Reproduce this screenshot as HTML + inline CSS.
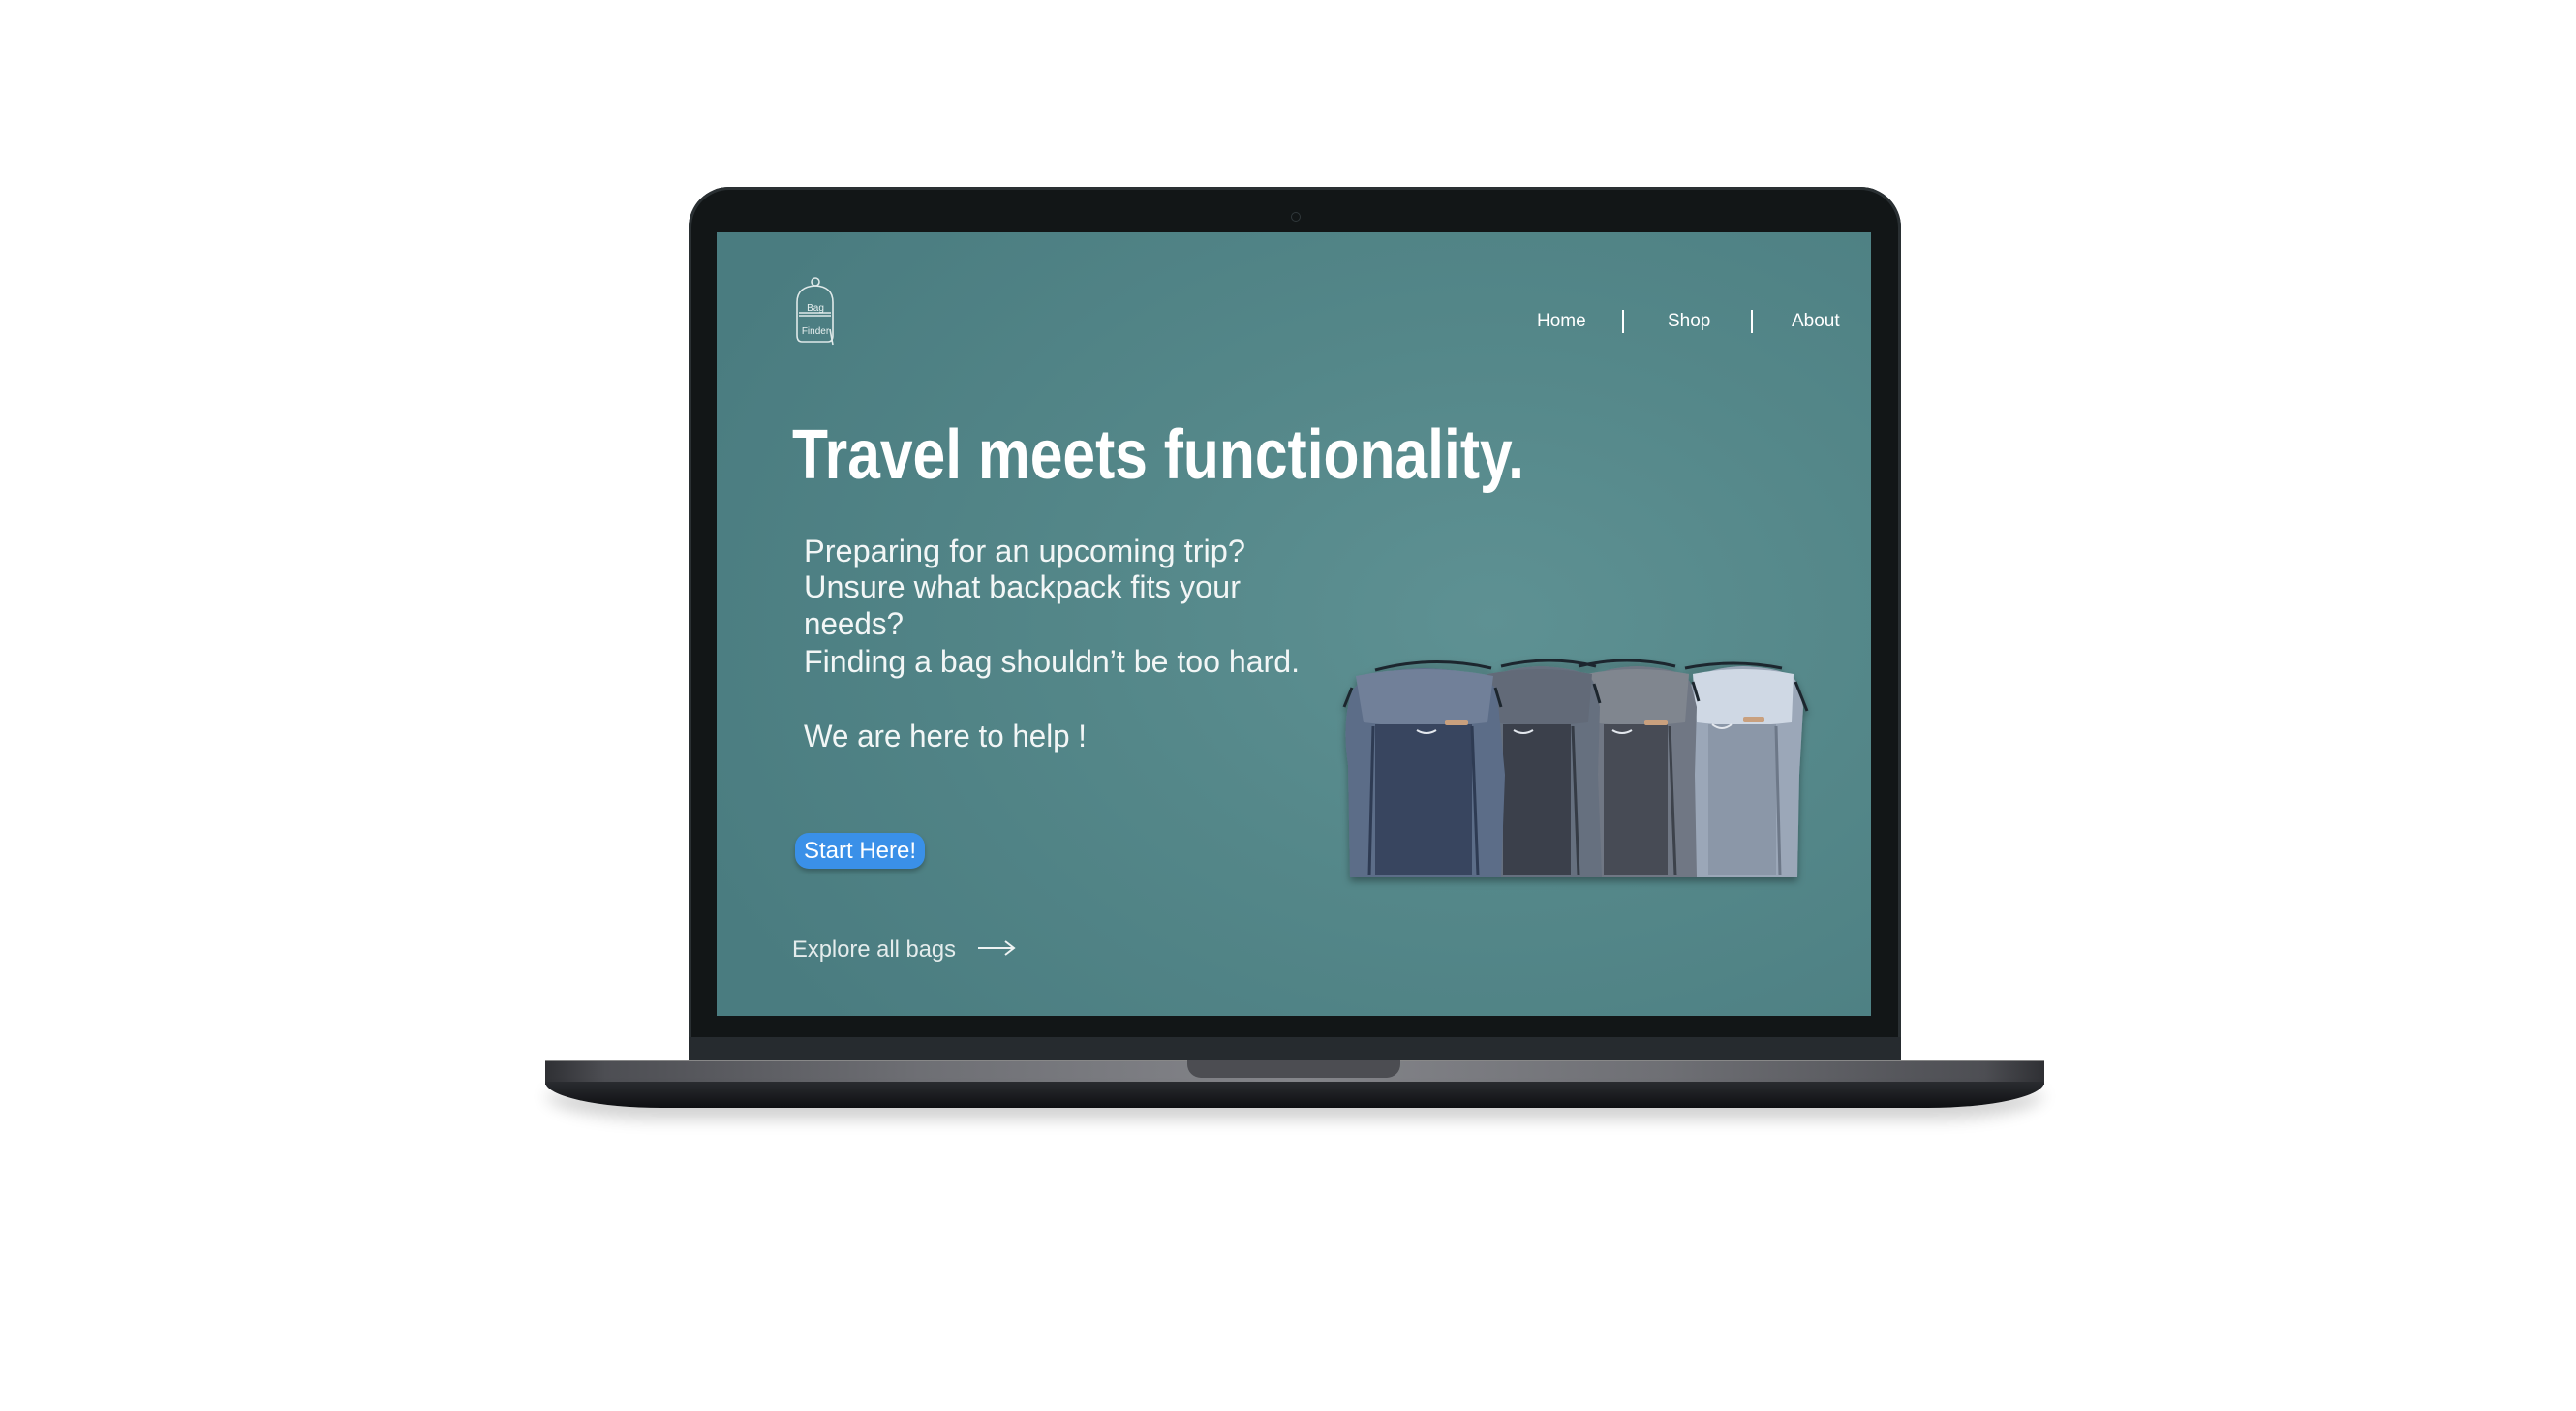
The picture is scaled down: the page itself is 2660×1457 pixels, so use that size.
<!DOCTYPE html>
<html><head><meta charset="utf-8"><style>
html,body{margin:0;padding:0;background:#fff;}
body{width:2660px;height:1457px;position:relative;overflow:hidden;font-family:"Liberation Sans",Arial,sans-serif;}
.lid{position:absolute;left:711px;top:193px;width:1252px;height:902px;background:#121617;border-radius:42px 42px 0 0;box-shadow:inset 0 0 0 3px #2a3033;}
.chin{position:absolute;left:711px;top:1071px;width:1252px;height:24px;background:#262b2f;}
.screen{position:absolute;left:740px;top:240px;width:1192px;height:809px;overflow:hidden;
background:radial-gradient(ellipse 900px 650px at 800px 400px,#5e9193 0%,#548789 45%,#4a7c80 100%);}
.cam{position:absolute;left:1333px;top:219px;width:8px;height:8px;border-radius:50%;border:1px solid #30383b;}
.base{position:absolute;left:563px;top:1095px;width:1548px;height:24px;
background:linear-gradient(90deg,#2f3034 0%,#4d4e53 4%,#6e6f74 25%,#85868b 50%,#6e6f74 75%,#4d4e53 96%,#2f3034 100%);border-top:1px solid #888;}
.base2{position:absolute;left:563px;top:1117px;width:1548px;height:27px;background:linear-gradient(#2a2c30,#0e0f12);border-radius:0 0 120px 120px/0 0 27px 27px;box-shadow:0 12px 16px rgba(0,0,0,.18);}
.notch{position:absolute;left:1226px;top:1095px;width:220px;height:18px;background:#4c4d52;border-radius:0 0 14px 14px;}
.nav{position:absolute;top:321px;color:#fff;font-size:19px;}
.bar{position:absolute;top:320px;width:2px;height:24px;background:#fff;}
.btn{position:absolute;left:821px;top:860px;width:134px;height:37px;background:#3a90e8;border-radius:14px;box-shadow:0 3px 5px rgba(0,0,0,.25);color:#fff;font-size:24px;line-height:37px;text-align:center;}
</style></head><body>
<div class="lid"></div>
<div class="chin"></div>
<div class="cam"></div>
<div class="screen"></div>
<div class="base"></div>
<div class="base2"></div>
<div class="notch"></div>

<svg style="position:absolute;left:0;top:0" width="2660" height="1457">
 <defs>
  <filter id="sh" x="-10%" y="-10%" width="120%" height="130%"><feDropShadow dx="0" dy="4" stdDeviation="4" flood-color="#000" flood-opacity=".35"/></filter>
 </defs>
 <g fill="none" stroke="#dfe9e9" stroke-width="1.6">
  <circle cx="842" cy="291" r="4"/>
  <path d="M828 353 Q823 353 823 346 L823 312 Q823 296 842 295 Q860 296 860 312 L860 346 Q860 353 855 353 Z"/>
  <path d="M825 323 L858 323 M825 326 L858 326"/>
  <path d="M857 340 L860 356"/>
 </g>
 <text x="842" y="321" fill="#e8f0f0" font-size="10" text-anchor="middle" font-family="Liberation Sans">Bag</text>
 <text x="842" y="345" fill="#e8f0f0" font-size="10" text-anchor="middle" font-family="Liberation Sans">Finder</text>

 <text x="818" y="494" fill="#fff" font-size="72" font-weight="bold" font-family="Liberation Sans" textLength="756" lengthAdjust="spacingAndGlyphs">Travel meets functionality.</text>
 <g fill="#f2f6f6" font-size="32" font-family="Liberation Sans">
  <text x="830" y="580" textLength="456" lengthAdjust="spacingAndGlyphs">Preparing for an upcoming trip?</text>
  <text x="830" y="617" textLength="451" lengthAdjust="spacingAndGlyphs">Unsure what backpack fits your</text>
  <text x="830" y="655" textLength="103" lengthAdjust="spacingAndGlyphs">needs?</text>
  <text x="830" y="694" textLength="512" lengthAdjust="spacingAndGlyphs">Finding a bag shouldn’t be too hard.</text>
  <text x="830" y="771" textLength="292" lengthAdjust="spacingAndGlyphs">We are here to help !</text>
 </g>
 <text x="818" y="988" fill="#e4ecec" font-size="24" font-family="Liberation Sans" textLength="169" lengthAdjust="spacingAndGlyphs">Explore all bags</text>
 <path d="M1010 979 L1046 979 M1038 972 L1047 979 L1038 986" stroke="#eef3f3" stroke-width="2" fill="none"/>

 <g transform="translate(1380,670)" filter="url(#sh)">
  <!-- handles -->
  <g fill="none" stroke="#1e252e" stroke-width="3">
   <path d="M40 22 Q100 6 160 20"/><path d="M170 18 Q220 6 268 18"/><path d="M250 18 Q300 6 350 18"/><path d="M360 20 Q410 10 460 20"/>
  </g>
  <!-- bag4 -->
  <path d="M362 236 L364 44 Q368 20 420 18 Q470 20 476 36 L482 60 L478 130 L476 236 Z" fill="#9ba7b8"/>
  <path d="M368 26 Q420 16 472 26 L470 76 Q420 82 372 76 Z" fill="#cfd8e4"/>
  <rect x="384" y="78" width="70" height="156" fill="#8b97a8"/>
  <path d="M454 80 L458 234" stroke="#6d7888" stroke-width="3"/>
  <!-- bag3 -->
  <path d="M252 236 L254 44 Q258 20 310 18 Q360 20 366 36 L372 60 L370 130 L372 236 Z" fill="#6f7784"/>
  <path d="M258 26 Q310 16 364 26 L360 76 Q310 82 262 76 Z" fill="#80868f"/>
  <rect x="276" y="78" width="66" height="156" fill="#474c54"/>
  <path d="M344 80 L350 234" stroke="#3c424b" stroke-width="3"/>
  <!-- bag2 -->
  <path d="M150 236 L152 44 Q156 20 210 18 Q262 20 266 36 L272 60 L270 130 L274 236 Z" fill="#66707f"/>
  <path d="M156 26 Q210 16 264 26 L260 76 Q210 82 162 76 Z" fill="#626b78"/>
  <rect x="172" y="78" width="70" height="156" fill="#3a414c"/>
  <path d="M244 80 L250 234" stroke="#343b45" stroke-width="3"/>
  <!-- bag1 -->
  <path d="M14 236 L12 120 Q6 80 14 50 Q20 22 90 20 Q160 22 166 46 L174 130 L170 236 Z" fill="#5c6d88"/>
  <path d="M20 28 Q90 14 162 28 L156 76 Q90 84 28 76 Z" fill="#718099"/>
  <rect x="40" y="78" width="100" height="156" fill="#37455e"/>
  <path d="M140 80 L146 234 M38 80 L34 234" stroke="#2f3b52" stroke-width="3"/>
  <!-- zipper pulls -->
  <g stroke="#1e252e" stroke-width="3" fill="none">
   <path d="M16 40 L8 60"/><path d="M164 40 L170 60"/><path d="M266 36 L272 56"/><path d="M368 34 L374 54"/><path d="M474 34 L486 64"/>
  </g>
  <g stroke="#e4e8ee" stroke-width="2" fill="none">
   <path d="M83 84 Q93 90 103 84 M183 84 Q193 90 203 84 M285 84 Q295 90 305 84 M388 78 Q398 86 408 78"/>
  </g>
  <g fill="#c9a07e">
   <rect x="112" y="73" width="24" height="6" rx="2"/><rect x="318" y="73" width="24" height="6" rx="2"/><rect x="420" y="70" width="22" height="6" rx="2"/>
  </g>
 </g>
</svg>

<div class="nav" style="left:1587px">Home</div>
<div class="bar" style="left:1675px"></div>
<div class="nav" style="left:1722px">Shop</div>
<div class="bar" style="left:1808px"></div>
<div class="nav" style="left:1850px">About</div>
<div class="btn">Start Here!</div>
</body></html>
